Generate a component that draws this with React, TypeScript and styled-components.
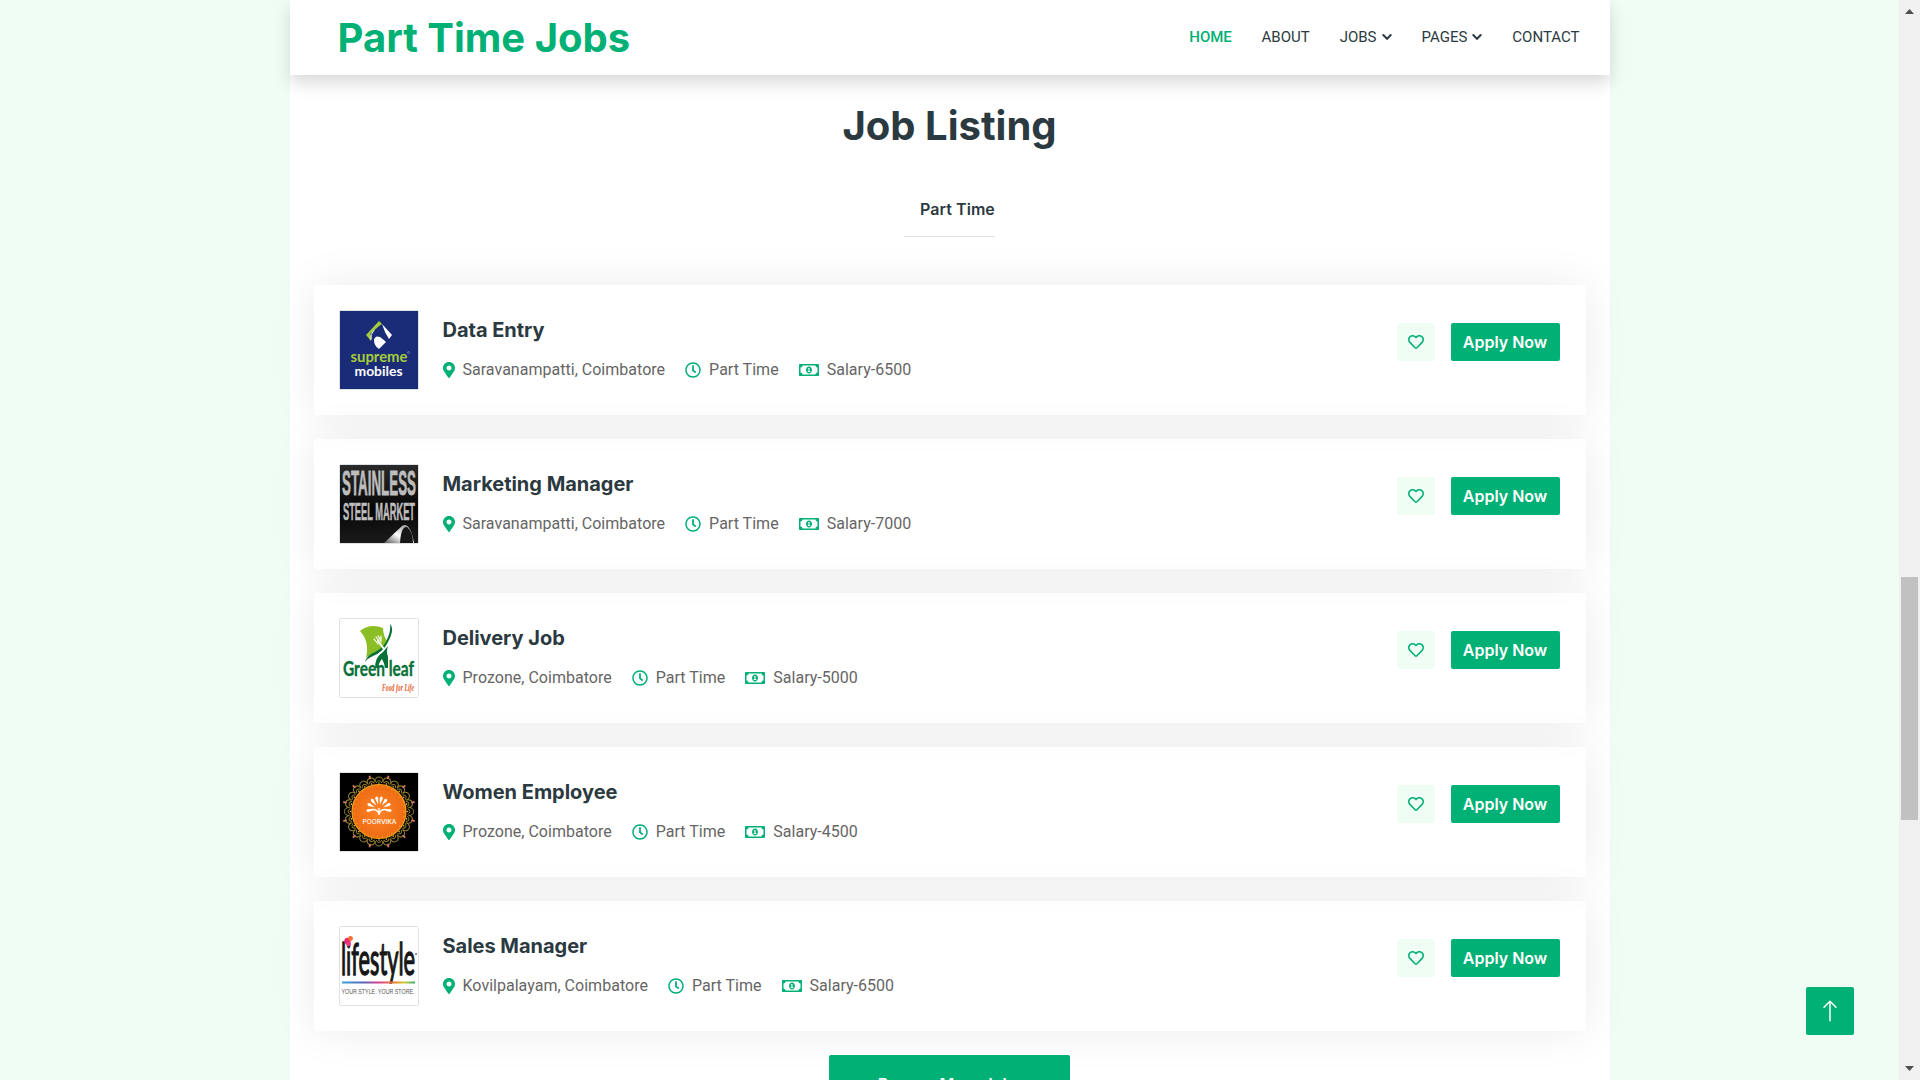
import React from 'react';
import styled, { createGlobalStyle } from 'styled-components';
import { FaMapMarkerAlt, FaRegClock, FaRegMoneyBillAlt, FaRegHeart } from 'react-icons/fa';
import { BsArrowUp } from 'react-icons/bs';

const GREEN = '#00b074';
const DARK = '#2b3940';
const LIGHT = '#effdf5';

const GlobalStyle = createGlobalStyle`
  *, *::before, *::after { box-sizing: border-box; }
  html, body { margin: 0; height: 1080px; overflow: hidden; }
  body {
    font-family: Roboto, 'Liberation Sans', sans-serif;
    font-size: 16px;
    line-height: 1.5;
    color: #666565;
    background: ${LIGHT};
  }
  h1, h5, p { margin: 0; }
`;

const Screen = styled.div`
  display: flex;
  width: 1920px;
  height: 1080px;
  overflow: hidden;
  background: ${LIGHT};
`;

const Viewport = styled.div`
  flex: 1;
  display: flex;
  justify-content: center;
  height: 1080px;
`;

const Container = styled.div`
  width: 1320px;
  height: 1080px;
  display: flex;
  flex-direction: column;
  background: #fff;
`;

const Navbar = styled.header`
  position: relative;
  z-index: 2;
  flex: none;
  height: 75px;
  display: flex;
  align-items: center;
  justify-content: space-between;
  padding: 0 30px 0 48px;
  background: #fff;
  box-shadow: 0 8px 16px rgba(0, 0, 0, 0.15);
`;

const Brand = styled.h1`
  font: 700 40px/48px Inter, sans-serif;
  color: ${GREEN};
`;

const Menu = styled.nav`
  display: flex;
  gap: 30px;
  padding-bottom: 2px;
`;

const MenuLink = styled.a<{ $active?: boolean }>`
  display: flex;
  align-items: center;
  font-size: 15px;
  font-weight: ${(p) => (p.$active ? 500 : 400)};
  letter-spacing: ${(p) => (p.$active ? '-0.1px' : 'normal')};
  line-height: 24px;
  color: ${(p) => (p.$active ? GREEN : DARK)};
`;

const Caret = styled.svg`
  width: 10px;
  height: 10px;
  margin-left: 5px;
`;

const Listing = styled.main`
  flex: 1;
  min-height: 0;
  display: flex;
  flex-direction: column;
  align-items: center;
  padding: 27px 24px 0;
`;

const Title = styled.h1`
  flex: none;
  font: 700 40px/48px Inter, sans-serif;
  color: ${DARK};
`;

const Tab = styled.div`
  flex: none;
  margin-top: 47px;
  height: 40px;
  border-bottom: 1px solid #dee2e6;
  padding-left: 16px;
  font: 600 16px/24px Inter, sans-serif;
  letter-spacing: 0.05px;
  color: ${DARK};
`;

const Jobs = styled.div`
  flex: none;
  width: 100%;
  margin-top: 48px;
  display: flex;
  flex-direction: column;
  gap: 24px;
`;

const Card = styled.article`
  height: 130px;
  display: flex;
  align-items: flex-start;
  padding: 24px 25px 24px 24px;
  border: 1px solid transparent;
  border-radius: 2px;
  box-shadow: 0 0 45px rgba(0, 0, 0, 0.08);
`;

const LogoFrame = styled.div`
  width: 80px;
  height: 80px;
  border: 1px solid #dee2e6;
  border-radius: 2px;
`;

const LogoArt = styled.svg`
  display: block;
  width: 78px;
  height: 78px;
  overflow: visible;
`;

const Details = styled.div`
  flex: 1;
  padding: 8px 0 0 24px;
`;

const JobTitle = styled.h5`
  font: 700 20px/24px Inter, sans-serif;
  letter-spacing: -0.02px;
  color: ${DARK};
  margin-bottom: 16px;
`;

const Facts = styled.div`
  display: flex;
  gap: 20px;
`;

const Fact = styled.span<{ $icon: number }>`
  display: flex;
  align-items: center;
  gap: 8px;
  line-height: 24px;
  letter-spacing: 0.02px;
  svg {
    flex: none;
    color: ${GREEN};
    width: ${(p) => p.$icon}px;
    height: 16px;
    margin-bottom: 1px;
  }
`;

const Actions = styled.div`
  display: flex;
  gap: 16px;
  padding-top: 13px;
`;

const LikeButton = styled.button`
  width: 38px;
  height: 38px;
  padding: 0;
  border: 0;
  border-radius: 2px;
  display: grid;
  place-items: center;
  background: ${LIGHT};
  color: ${GREEN};
`;

const ApplyButton = styled.button`
  height: 38px;
  width: 109px;
  padding: 0;
  border: 0;
  border-radius: 2px;
  background: ${GREEN};
  color: #fff;
  font: 600 16px/24px Inter, sans-serif;
  white-space: nowrap;
`;

const BrowseButton = styled.button`
  flex: none;
  margin-top: 24px;
  width: 241px;
  height: 58px;
  border: 0;
  border-radius: 2px;
  background: ${GREEN};
  color: #fff;
  font: 600 16px/24px Inter, sans-serif;
`;

const BackToTop = styled.button`
  position: fixed;
  left: 1806px;
  top: 987px;
  width: 48px;
  height: 48px;
  padding: 0;
  border: 0;
  border-radius: 2px;
  display: grid;
  place-items: center;
  background: ${GREEN};
  color: #fff;
`;

const Scrollbar = styled.aside`
  position: relative;
  z-index: 3;
  width: 21px;
  height: 1080px;
  padding-top: 9px;
  display: flex;
  flex-direction: column;
  align-items: center;
  background: #f0f0f0;
`;

const ScrollArrow = styled.svg`
  flex: none;
  width: 9px;
  height: 5px;
`;

const Thumb = styled.div`
  flex: none;
  width: 17px;
  height: 243px;
  margin: 563px 0 246px;
  background: #c1c1c1;
`;

const SupremeLogo = () => (
  <LogoArt viewBox="0 0 78 78">
    <rect width="78" height="78" fill="#1a2b78" />
    <path d="M39 10 L26 24 L31 30 L31 25 L30 23 L39 15 L42 13 Z" fill="#a5cd39" />
    <path d="M42 13 L52 24 L49 28 L45 21 Z" fill="#fff" />
    <path d="M34 29 Q35 24 40 26 Q44 29 46 31 L39 38 Q34 35 34 29 Z" fill="#fff" />
    <path d="M34 19 Q30 23 31 29" stroke="#fff" strokeWidth="1" fill="none" />
    <text x="10.5" y="51" textLength="57" lengthAdjust="spacingAndGlyphs" fontFamily="Lato, sans-serif" fontSize="16" fontWeight="700" fill="#a5cd39">supreme</text>
    <text x="14.5" y="64.5" textLength="48" lengthAdjust="spacingAndGlyphs" fontFamily="Lato, sans-serif" fontSize="13.5" fontWeight="700" fill="#fff">mobiles</text>
    <circle cx="68.5" cy="41.5" r="1" fill="none" stroke="#a9b3d6" strokeWidth=".5" />
  </LogoArt>
);

const SteelLogo = () => (
  <LogoArt viewBox="0 0 78 78">
    <defs>
      <linearGradient id="steelBg" x1="0" y1="0" x2="0" y2="1">
        <stop offset="0" stopColor="#2a2a2a" />
        <stop offset=".55" stopColor="#070707" />
        <stop offset="1" stopColor="#1a1a1a" />
      </linearGradient>
      <linearGradient id="pipe" x1="0" y1="1" x2="1" y2="0">
        <stop offset="0" stopColor="#555" />
        <stop offset=".45" stopColor="#fff" />
        <stop offset="1" stopColor="#777" />
      </linearGradient>
    </defs>
    <rect width="78" height="78" fill="url(#steelBg)" />
    <text transform="translate(2 30) scale(1 1.6)" textLength="74" lengthAdjust="spacingAndGlyphs" fontFamily="Liberation Sans" fontSize="22" fontWeight="700" fill="#bdbdbd" stroke="#bdbdbd" strokeWidth=".5">STAINLESS</text>
    <text transform="translate(3 55) scale(1 1.45)" textLength="72" lengthAdjust="spacingAndGlyphs" fontFamily="Liberation Sans" fontSize="16.5" fontWeight="700" fill="#bdbdbd" stroke="#bdbdbd" strokeWidth=".4">STEEL MARKET</text>
    <path d="M44 78 L62 61 Q70 56 74 78 Z" fill="url(#pipe)" />
    <path d="M60 78 Q61 61 67 62 Q73 67 73 78 Z" fill="#171717" />
  </LogoArt>
);

const GreenLeafLogo = () => (
  <LogoArt viewBox="0 0 78 78">
    <rect width="78" height="78" fill="#fff" />
    <path d="M20 12 Q30 4 43 9 Q43 17 48 23 Q44 32 36 34 Q30 35 26 39 Q30 23 20 12Z" fill="#8bbd25" />
    <path d="M50 5 Q55 10 48 23 Q42 34 33 37 Q28 39 25 43 Q27 36 35 33 Q45 28 48 18 Q51 11 50 5Z" fill="#087137" />
    <path d="M35 49 Q35 38 43 33 L48 27 Q46 33 48 38 L48 49 L45 49 Q44 43 42 40 Q39 43 38 49Z" fill="#087137" />
    <g stroke="#fff" fill="none" strokeLinecap="round">
      <path d="M38 22 L44 30" strokeWidth="2" />
      <path d="M34 20 L38 25 M36 18 L39 22 M38 17 L41 22 M41 17 L41 23" strokeWidth="1.2" />
    </g>
    <text transform="translate(3 57) scale(1 1.2)" textLength="71" lengthAdjust="spacingAndGlyphs" fontFamily="Lato, sans-serif" fontSize="18" fontWeight="700" fill="#087137" stroke="#087137" strokeWidth=".3">Green leaf</text>
    <text x="42" y="71.5" textLength="32" lengthAdjust="spacingAndGlyphs" fontFamily="Liberation Serif" fontSize="11" fontStyle="italic" fontWeight="700" fill="#df5b2c">Food for Life</text>
  </LogoArt>
);

const petals = [-98, -66, -38, -12, 12, 38, 66, 98];
const ring = Array.from({ length: 24 }, (_, i) => i * 15);

const PoorvikaLogo = () => (
  <LogoArt viewBox="0 0 78 78">
    <defs>
      <radialGradient id="sun">
        <stop offset="0" stopColor="#ff8527" />
        <stop offset="1" stopColor="#ed6b13" />
      </radialGradient>
    </defs>
    <rect width="78" height="78" fill="#000" />
    {ring.map((a) => (
      <g key={a} transform={`rotate(${a} 39 38.5)`}>
        <path d="M35 9 Q35 4 39 4 Q43 4 43 9 M36 10 Q39 5 42 10" fill="none" stroke="#94812b" strokeWidth="1" />
        <circle cx="39" cy="10" r=".8" fill="#e8bd3f" />
      </g>
    ))}
    {ring.filter((_, i) => i % 2 === 0).map((a) => (
      <path key={a} d="M39 1.5 V5" transform={`rotate(${a + 15} 39 38.5)`} stroke="#d87868" strokeWidth="1.8" />
    ))}
    <circle cx="39" cy="38.5" r="27" fill="url(#sun)" stroke="#f5a51c" strokeWidth="1.2" />
    <circle cx="39" cy="38.5" r="25" fill="none" stroke="#ffb12b" strokeWidth="1" strokeDasharray="1 4" />
    {petals.map((a) => (
      <path key={a} d="M39 31.5 L37.4 25 Q39 21.5 40.6 25 Z" transform={`rotate(${a} 39 36)`} fill="#fff" />
    ))}
    <path d="M39 42 V35 M39 41 Q37 35 30 37 M39 41 Q41 35 48 37" fill="none" stroke="#fff" strokeWidth="1.3" />
    <text x="22.5" y="51" textLength="34" lengthAdjust="spacingAndGlyphs" fontFamily="Inter" fontSize="5.6" fontWeight="500" fill="#fff">POORVIKA</text>
  </LogoArt>
);

const LifestyleLogo = () => (
  <LogoArt viewBox="0 0 78 78">
    <defs>
      <linearGradient id="rainbow">
        <stop offset="0" stopColor="#35a6d8" />
        <stop offset=".3" stopColor="#5961b5" />
        <stop offset=".5" stopColor="#d93d91" />
        <stop offset=".72" stopColor="#ef7d2c" />
        <stop offset=".86" stopColor="#c8cd36" />
        <stop offset="1" stopColor="#2eac72" />
      </linearGradient>
    </defs>
    <rect width="78" height="78" fill="#fff" />
    <text transform="translate(1 47.5) scale(1 1.8)" textLength="74" lengthAdjust="spacingAndGlyphs" fontFamily="Lato, sans-serif" fontSize="25" fontWeight="400" fill="#171717" stroke="#171717" strokeWidth=".8">lifestyle</text>
    <circle cx="7.5" cy="14" r="3.2" fill="#ef276f" />
    <circle cx="10.5" cy="11.5" r="2.4" fill="#f36f32" />
    <circle cx="8.5" cy="17" r="2.4" fill="#ee397a" />
    <circle cx="76" cy="27" r=".8" fill="none" stroke="#333" strokeWidth=".6" />
    <rect x="2" y="54.5" width="73" height="2" fill="url(#rainbow)" />
    <text x="1.5" y="67" textLength="73" lengthAdjust="spacingAndGlyphs" fontFamily="Liberation Sans" fontSize="8" fill="#555">YOUR STYLE. YOUR STORE.</text>
  </LogoArt>
);

const jobs = [
  { title: 'Data Entry', place: 'Saravanampatti, Coimbatore', salary: 6500, Logo: SupremeLogo },
  { title: 'Marketing Manager', place: 'Saravanampatti, Coimbatore', salary: 7000, Logo: SteelLogo },
  { title: 'Delivery Job', place: 'Prozone, Coimbatore', salary: 5000, Logo: GreenLeafLogo },
  { title: 'Women Employee', place: 'Prozone, Coimbatore', salary: 4500, Logo: PoorvikaLogo },
  { title: 'Sales Manager', place: 'Kovilpalayam, Coimbatore', salary: 6500, Logo: LifestyleLogo },
];

const DropCaret = () => (
  <Caret viewBox="0 0 10 10">
    <path d="M1.3 3 L5 6.9 L8.7 3" fill="none" stroke="currentColor" strokeWidth="2" strokeLinecap="round" strokeLinejoin="round" />
  </Caret>
);

export default function App() {
  return (
    <Screen>
      <GlobalStyle />
      <Viewport>
        <Container>
          <Navbar>
            <Brand>Part Time Jobs</Brand>
            <Menu>
              <MenuLink $active>HOME</MenuLink>
              <MenuLink>ABOUT</MenuLink>
              <MenuLink>JOBS<DropCaret /></MenuLink>
              <MenuLink>PAGES<DropCaret /></MenuLink>
              <MenuLink>CONTACT</MenuLink>
            </Menu>
          </Navbar>
          <Listing>
            <Title>Job Listing</Title>
            <Tab>Part Time</Tab>
            <Jobs>
              {jobs.map(({ title, place, salary, Logo }) => (
                <Card key={title}>
                  <LogoFrame><Logo /></LogoFrame>
                  <Details>
                    <JobTitle>{title}</JobTitle>
                    <Facts>
                      <Fact $icon={12}><FaMapMarkerAlt />{place}</Fact>
                      <Fact $icon={16}><FaRegClock />Part Time</Fact>
                      <Fact $icon={20}><FaRegMoneyBillAlt />Salary-{salary}</Fact>
                    </Facts>
                  </Details>
                  <Actions>
                    <LikeButton><FaRegHeart size={16} /></LikeButton>
                    <ApplyButton>Apply Now</ApplyButton>
                  </Actions>
                </Card>
              ))}
            </Jobs>
            <BrowseButton>Browse More Jobs</BrowseButton>
          </Listing>
        </Container>
      </Viewport>
      <BackToTop><BsArrowUp size={24} /></BackToTop>
      <Scrollbar>
        <ScrollArrow viewBox="0 0 9 5"><path d="M0 5 L4.5 0 L9 5Z" fill="#505050" /></ScrollArrow>
        <Thumb />
        <ScrollArrow viewBox="0 0 9 5"><path d="M0 0 L4.5 5 L9 0Z" fill="#505050" /></ScrollArrow>
      </Scrollbar>
    </Screen>
  );
}
